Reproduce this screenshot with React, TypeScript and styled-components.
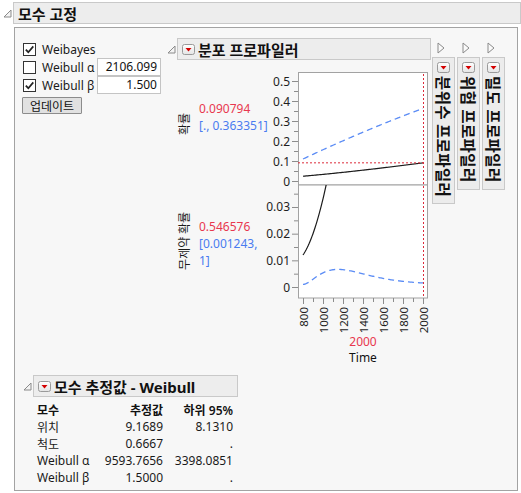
import styled, { createGlobalStyle } from "styled-components";

const GlobalStyles = createGlobalStyle`
  html, body {
    margin: 0;
    padding: 0;
    background: #ffffff;
  }
  body {
    font-family: "Noto Sans", "Noto Sans CJK KR", sans-serif;
    font-size: 12px;
    color: #1a1a1a;
  }
`;

const ALPHA = 9593.7656;
const BETA = 1.5;

const tx = (t: number) => 303 + (t - 800) / 10;
const yTop = (v: number) => 181 - v * 200;
const yBot = (v: number) => 287 - v * 2666.7;

const range = (from: number, to: number, step: number) => {
  const out: number[] = [];
  for (let v = from; v <= to + 1e-9; v += step) out.push(Math.round(v * 1e6) / 1e6);
  return out;
};

const toPath = (pts: [number, number][]) =>
  pts.map(([x, y], i) => `${i === 0 ? "M" : "L"}${x.toFixed(2)} ${y.toFixed(2)}`).join(" ");

const times = range(800, 2000, 10);

const cdf = (t: number) => 1 - Math.exp(-Math.pow(t / ALPHA, BETA));
const upper = (t: number) => {
  const s = (t - 800) / 1200;
  return 0.11 + 0.253 * s + 0.03 * s * (1 - s);
};
const rawProb = (t: number) => {
  const d = (t - 800) / 100;
  return 0.012 + 0.00546 * d + 0.00254 * d * d;
};
const rawLower = (t: number) => {
  const d = (t - 800) / 100;
  return 0.001 + 0.0056 * Math.pow(d / 3.5, 2) * Math.exp(-(d - 3.5) / 1.75);
};

function OpenTriangle() {
  return (
    <svg width="9" height="9" viewBox="0 0 9 9">
      <polygon points="8,1 8,8 1,8" fill="#f4f4f4" stroke="#8a8a8a" strokeWidth="1" />
    </svg>
  );
}

function ClosedTriangle() {
  return (
    <svg width="8" height="12" viewBox="0 0 8 12">
      <polygon points="1,1 7,6 1,11" fill="#fafafa" stroke="#8a8a8a" strokeWidth="1" />
    </svg>
  );
}

function MenuButton() {
  return (
    <svg width="13" height="11" viewBox="0 0 13 11">
      <defs>
        <linearGradient id="menuGrad" x1="0" y1="0" x2="0" y2="1">
          <stop offset="0" stopColor="#ffffff" />
          <stop offset="1" stopColor="#e4e4e4" />
        </linearGradient>
      </defs>
      <rect x="0.5" y="0.5" width="12" height="10" rx="2" fill="url(#menuGrad)" stroke="#9a9a9a" />
      <polygon points="3.5,4 9.5,4 6.5,7.5" fill="#d40000" />
    </svg>
  );
}

function CheckBox({ checked }: { checked: boolean }) {
  return (
    <Box>
      {checked ? (
        <svg width="11" height="11" viewBox="0 0 11 11">
          <path d="M1.8 5.6 L4.3 8.2 L9.3 2.4" fill="none" stroke="#222" strokeWidth="1.7" />
        </svg>
      ) : null}
    </Box>
  );
}

function ProfilerChart() {
  const topMajor = range(0, 0.5, 0.1);
  const topMinor = range(0.05, 0.45, 0.1);
  const botMajor = range(0, 0.03, 0.01);
  const botMinor = range(0.005, 0.035, 0.01);
  const xMajor = range(800, 2000, 200);
  const xMinor = range(900, 1900, 200);
  const curY = yTop(cdf(2000));

  return (
    <ChartSvg width="167" height="264" viewBox="262 70 167 264">
      <defs>
        <clipPath id="clipTop">
          <rect x="298" y="72" width="130" height="113" />
        </clipPath>
        <clipPath id="clipBot">
          <rect x="298" y="185" width="130" height="113" />
        </clipPath>
      </defs>
      <rect x="298.5" y="72.5" width="129" height="112.5" fill="#ffffff" stroke="#a2a2a2" />
      <rect x="298.5" y="185" width="129" height="113" fill="#ffffff" stroke="#a2a2a2" />

      {topMajor.map((v) => (
        <g key={`tm${v}`}>
          <line x1="292" x2="298" y1={yTop(v) + 0.5} y2={yTop(v) + 0.5} stroke="#8c8c8c" />
          <text x="290" y={yTop(v)} textAnchor="end" dominantBaseline="central" fontSize="12" fill="#1e1e1e">
            {v === 0 ? "0" : String(v)}
          </text>
        </g>
      ))}
      {topMinor.map((v) => (
        <line key={`tn${v}`} x1="294" x2="298" y1={yTop(v) + 0.5} y2={yTop(v) + 0.5} stroke="#8c8c8c" />
      ))}
      {botMajor.map((v) => (
        <g key={`bm${v}`}>
          <line x1="292" x2="298" y1={yBot(v) + 0.5} y2={yBot(v) + 0.5} stroke="#8c8c8c" />
          <text x="290" y={yBot(v)} textAnchor="end" dominantBaseline="central" fontSize="12" fill="#1e1e1e">
            {v === 0 ? "0" : String(v)}
          </text>
        </g>
      ))}
      {botMinor.map((v) => (
        <line key={`bn${v}`} x1="294" x2="298" y1={yBot(v) + 0.5} y2={yBot(v) + 0.5} stroke="#8c8c8c" />
      ))}
      {xMajor.map((t) => (
        <g key={`xm${t}`}>
          <line x1={tx(t) + 0.5} x2={tx(t) + 0.5} y1="298" y2="304" stroke="#8c8c8c" />
          <text
            transform={`translate(${tx(t) + 0.5} 307) rotate(-90)`}
            textAnchor="end"
            dominantBaseline="central"
            fontSize="11.5"
            fill="#1e1e1e"
          >
            {t}
          </text>
        </g>
      ))}
      {xMinor.map((t) => (
        <line key={`xn${t}`} x1={tx(t) + 0.5} x2={tx(t) + 0.5} y1="298" y2="302" stroke="#8c8c8c" />
      ))}

      <g clipPath="url(#clipTop)">
        <path d={toPath(times.map((t) => [tx(t), yTop(upper(t))]))} fill="none" stroke="#5b8cf5" strokeWidth="1.3" strokeDasharray="6 4" />
        <path d={toPath(times.map((t) => [tx(t), yTop(cdf(t))]))} fill="none" stroke="#1b1b1b" strokeWidth="1.2" />
        <line x1="298" x2="423" y1={curY} y2={curY} stroke="#dc2b3a" strokeDasharray="2 2" />
      </g>
      <g clipPath="url(#clipBot)">
        <path d={toPath(times.map((t) => [tx(t), yBot(rawLower(t))]))} fill="none" stroke="#5b8cf5" strokeWidth="1.3" strokeDasharray="6 4" />
        <path d={toPath(times.filter((t) => t <= 1060).map((t) => [tx(t), yBot(rawProb(t))]))} fill="none" stroke="#1b1b1b" strokeWidth="1.2" />
      </g>
      <line x1="423.5" x2="423.5" y1="74" y2="298" stroke="#dc2b3a" strokeDasharray="2 2" />
    </ChartSvg>
  );
}

const sideOutlines = ["분위수 프로파일러", "위험 프로파일러", "밀도 프로파일러"];

const estimates = [
  ["위치", "9.1689", "8.1310"],
  ["척도", "0.6667", "."],
  ["Weibull α", "9593.7656", "3398.0851"],
  ["Weibull β", "1.5000", "."],
];

function App() {
  return (
    <>
      <GlobalStyles />
      <Page>
        <OutlineRow>
          <OpenTriangle />
          <TitleBox $grow>모수 고정</TitleBox>
        </OutlineRow>

        <Panel>
          <TopRow>
            <Controls>
              <CheckRow>
                <CheckBox checked />
                <CheckLabel>Weibayes</CheckLabel>
              </CheckRow>
              <CheckRow>
                <CheckBox checked={false} />
                <CheckLabel $width={55}>Weibull α</CheckLabel>
                <NumberField>2106.099</NumberField>
              </CheckRow>
              <CheckRow>
                <CheckBox checked />
                <CheckLabel $width={55}>Weibull β</CheckLabel>
                <NumberField>1.500</NumberField>
              </CheckRow>
              <UpdateButton>업데이트</UpdateButton>
            </Controls>

            <Profiler>
              <OutlineRow>
                <OpenTriangle />
                <TitleBox $width={254}>
                  <MenuButton />
                  <span>분포 프로파일러</span>
                </TitleBox>
              </OutlineRow>
              <ProfilerBody>
                <LabelColumn>
                  <LabelBlock $height={115}>
                    <AxisTitle $top={43}>확률</AxisTitle>
                    <Readout $top={30}>
                      <Current>0.090794</Current>
                      <Interval>[., 0.363351]</Interval>
                    </Readout>
                  </LabelBlock>
                  <LabelBlock $height={113}>
                    <AxisTitle $top={27}>무제약 확률</AxisTitle>
                    <Readout $top={33}>
                      <Current>0.546576</Current>
                      <Interval>
                        [0.001243,
                        <br />
                        1]
                      </Interval>
                    </Readout>
                  </LabelBlock>
                </LabelColumn>
                <ChartColumn>
                  <ProfilerChart />
                  <XCurrent>2000</XCurrent>
                  <XTitle>Time</XTitle>
                </ChartColumn>
              </ProfilerBody>
            </Profiler>

            <SideOutlines>
              {sideOutlines.map((name) => (
                <SideOutline key={name}>
                  <SideTriangle>
                    <ClosedTriangle />
                  </SideTriangle>
                  <SideBox>
                    <MenuButton />
                    <SideText>{name}</SideText>
                  </SideBox>
                </SideOutline>
              ))}
            </SideOutlines>
          </TopRow>

          <Estimates>
            <OutlineRow>
              <OpenTriangle />
              <TitleBox $width={205}>
                <MenuButton />
                <span>모수 추정값 - Weibull</span>
              </TitleBox>
            </OutlineRow>
            <EstimateTable>
              <HeadCell>모수</HeadCell>
              <HeadCell $right>추정값</HeadCell>
              <HeadCell $right>하위 95%</HeadCell>
              {estimates.map((row) =>
                row.map((cell, i) => (
                  <Cell key={`${row[0]}-${i}`} $right={i > 0}>
                    {cell}
                  </Cell>
                ))
              )}
            </EstimateTable>
          </Estimates>
        </Panel>
      </Page>
    </>
  );
}

const Page = styled.div`
  width: 521px;
  height: 493px;
  overflow: hidden;
  box-sizing: border-box;
  padding: 2px 0 0 3px;
  background: #ffffff;
`;

const OutlineRow = styled.div`
  display: flex;
  align-items: center;
  gap: 1px;
`;

const TitleBox = styled.div<{ $grow?: boolean; $width?: number }>`
  ${(p) => (p.$grow ? "flex: 1;" : `width: ${p.$width}px;`)}
  box-sizing: border-box;
  height: 22px;
  display: flex;
  align-items: center;
  gap: 3px;
  padding-left: 4px;
  background: #ededed;
  border: 1px solid #c9c9c9;
  font-size: 15px;
  font-weight: 700;
  color: #111111;
  white-space: nowrap;
`;

const Panel = styled.div`
  margin: 3px 0 0 11px;
  width: 504px;
  height: 464px;
  box-sizing: border-box;
  border: 1px solid #a3a3a3;
  background: #f7f7f7;
  padding: 10px 0 0 7px;
`;

const TopRow = styled.div`
  display: flex;
  align-items: flex-start;
`;

const Controls = styled.div`
  width: 139px;
  padding-top: 2px;
  display: flex;
  flex-direction: column;
  align-items: flex-start;
`;

const CheckRow = styled.div`
  height: 18px;
  display: flex;
  align-items: center;
`;

const Box = styled.div`
  width: 13px;
  height: 13px;
  box-sizing: border-box;
  margin-left: 1px;
  border: 1px solid #333333;
  background: #ffffff;
  display: flex;
  align-items: center;
  justify-content: center;
`;

const CheckLabel = styled.span<{ $width?: number }>`
  margin-left: 6px;
  ${(p) => (p.$width ? `width: ${p.$width}px;` : "")}
  font-size: 12px;
  color: #1a1a1a;
`;

const NumberField = styled.div`
  width: 64px;
  height: 18px;
  box-sizing: border-box;
  border: 1px solid #c4c4c4;
  background: #ffffff;
  text-align: right;
  padding-right: 3px;
  font-size: 12px;
  line-height: 16px;
  color: #111111;
`;

const UpdateButton = styled.button`
  margin-top: 3px;
  width: 60px;
  height: 17px;
  padding: 0;
  border: 1px solid #8c8c8c;
  border-radius: 1px;
  background: #e1e1e1;
  font-family: "Noto Sans CJK KR", sans-serif;
  font-size: 12px;
  line-height: 14px;
  color: #111111;
`;

const Profiler = styled.div`
  margin-left: 6px;
  display: flex;
  flex-direction: column;
`;

const ProfilerBody = styled.div`
  display: flex;
  margin-left: 8px;
  margin-top: 10px;
`;

const LabelColumn = styled.div`
  width: 87px;
  display: flex;
  flex-direction: column;
`;

const LabelBlock = styled.div<{ $height: number }>`
  height: ${(p) => p.$height}px;
  display: flex;
  align-items: flex-start;
  padding-left: 3px;
`;

const AxisTitle = styled.div<{ $top: number }>`
  margin-top: ${(p) => p.$top}px;
  writing-mode: vertical-rl;
  text-orientation: sideways;
  transform: rotate(180deg);
  font-family: "Noto Sans CJK KR", sans-serif;
  font-size: 12px;
  line-height: 12px;
  width: 12px;
  color: #1a1a1a;
  margin-right: 9px;
`;

const Readout = styled.div<{ $top: number }>`
  margin-top: ${(p) => p.$top}px;
  font-size: 12px;
  line-height: 17px;
  white-space: nowrap;
`;

const Current = styled.div`
  color: #e8384f;
`;

const Interval = styled.div`
  color: #4a7cf0;
`;

const ChartColumn = styled.div`
  display: flex;
  flex-direction: column;
`;

const ChartSvg = styled.svg`
  display: block;
  overflow: visible;
`;

const XCurrent = styled.div`
  padding-left: 36px;
  width: 130px;
  text-align: center;
  font-size: 12px;
  line-height: 15px;
  color: #e8384f;
`;

const XTitle = styled.div`
  padding-left: 36px;
  width: 130px;
  text-align: center;
  font-size: 12px;
  line-height: 17px;
  color: #111111;
`;

const SideOutlines = styled.div`
  display: flex;
  gap: 2px;
  margin-left: 1px;
`;

const SideOutline = styled.div`
  width: 23px;
  display: flex;
  flex-direction: column;
`;

const SideTriangle = styled.div`
  height: 12px;
  padding: 4px 0 3px 5px;
  display: flex;
`;

const SideBox = styled.div`
  box-sizing: border-box;
  width: 23px;
  border: 1px solid #c9c9c9;
  background: #ececec;
  display: flex;
  flex-direction: column;
  align-items: center;
  padding: 4px 0 6px;
  gap: 3px;
`;

const SideText = styled.div`
  writing-mode: vertical-rl;
  text-orientation: sideways;
  font-family: "Noto Sans CJK KR", sans-serif;
  font-size: 15.5px;
  letter-spacing: 0.4px;
  font-weight: 700;
  line-height: 18px;
  color: #111111;
`;

const Estimates = styled.div`
  margin-top: 9px;
  margin-left: 1px;
  display: flex;
  flex-direction: column;
`;

const EstimateTable = styled.div`
  margin: 4px 0 0 14px;
  display: grid;
  grid-template-columns: 60px 66px 70px;
  grid-auto-rows: 17px;
  align-items: center;
`;

const HeadCell = styled.div<{ $right?: boolean }>`
  text-align: ${(p) => (p.$right ? "right" : "left")};
  font-size: 12px;
  font-weight: 600;
  color: #111111;
`;

const Cell = styled.div<{ $right?: boolean }>`
  text-align: ${(p) => (p.$right ? "right" : "left")};
  font-size: 12px;
  color: #1a1a1a;
  white-space: nowrap;
`;

export default App;
